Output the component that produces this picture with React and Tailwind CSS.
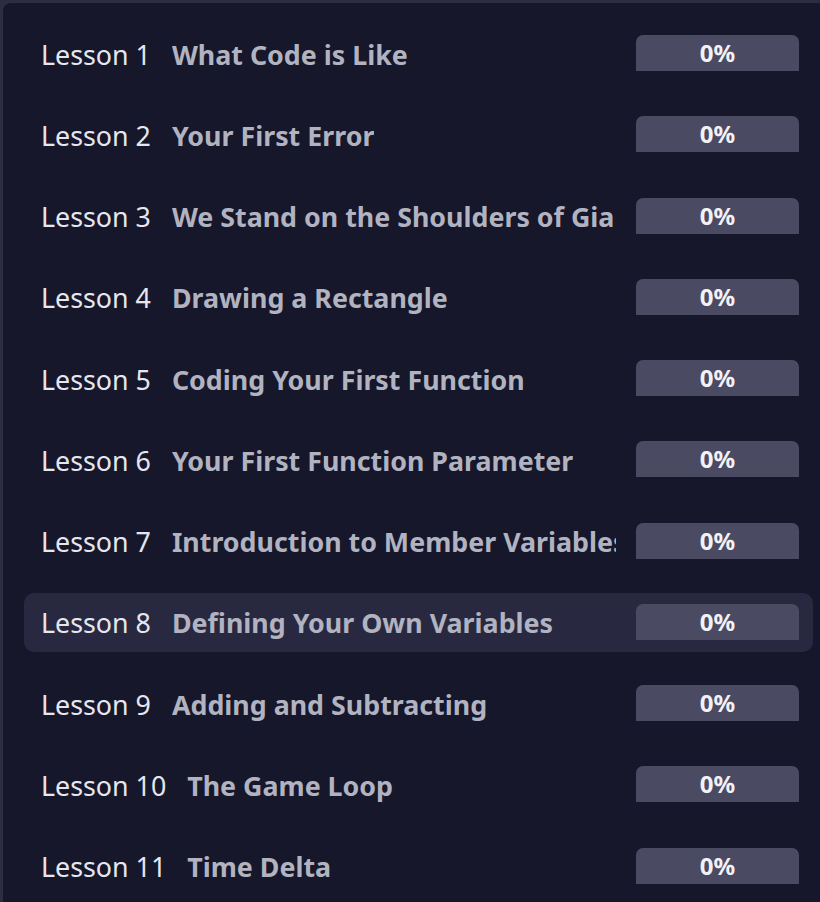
import React from "react";

const lessons = [
  "What Code is Like",
  "Your First Error",
  "We Stand on the Shoulders of Giants",
  "Drawing a Rectangle",
  "Coding Your First Function",
  "Your First Function Parameter",
  "Introduction to Member Variables",
  "Defining Your Own Variables",
  "Adding and Subtracting",
  "The Game Loop",
  "Time Delta",
];

function Row({ n, title, active }) {
  return (
    <div
      className={
        "flex items-center h-[59px] shrink-0 pl-[17px] pr-[14px] rounded-[10px] " +
        (active ? "bg-[#282940]" : "")
      }
    >
      <div className="flex items-center min-w-0 flex-1 overflow-hidden whitespace-nowrap pt-[2px]">
        <span className="text-[26.8px] leading-[38px] text-[#e6e6ee] shrink-0">
          Lesson {n}
        </span>
        <span className="ml-[21px] text-[26.8px] leading-[38px] font-bold text-[#b2b3c0] overflow-hidden">
          {title}
        </span>
      </div>
      <div className="ml-[20px] w-[163px] h-[36px] shrink-0 self-start mt-[11px] bg-[#4b4a63] rounded-t-[7px] flex items-center justify-center">
        <span className="text-[24px] leading-none font-bold text-[#f2f2f6]">0%</span>
      </div>
    </div>
  );
}

export default function App() {
  return (
    <div
      className="w-[820px] h-[902px] bg-[#2c2d41] pt-[3px] pl-[3px] overflow-hidden"
      style={{ fontFamily: '"Noto Sans", sans-serif' }}
    >
      <div className="h-full bg-[#16172a] rounded-tl-[8px] pl-[21px] pr-[7px] pt-[21px] flex flex-col gap-[22.25px]">
        {lessons.map((t, i) => (
          <Row key={i} n={i + 1} title={t} active={i === 7} />
        ))}
      </div>
    </div>
  );
}
